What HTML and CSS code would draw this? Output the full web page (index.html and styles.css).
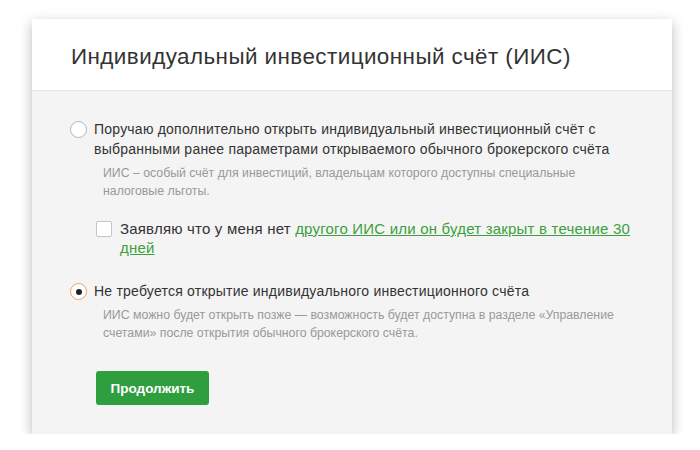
FILE: index.html
```html
<!DOCTYPE html>
<html lang="ru">
<head>
<meta charset="utf-8">
<link rel="stylesheet" href="styles.css">
</head>
<body>
<div class="card">
  <div class="card-head">
    <h1 class="title">Индивидуальный инвестиционный счёт (ИИС)</h1>
  </div>
  <div class="card-body">
    <div class="option">
      <span class="radio"></span>
      <div class="option-text">
        <div class="label">Поручаю дополнительно открыть индивидуальный инвестиционный счёт с выбранными ранее параметрами открываемого обычного брокерского счёта</div>
        <div class="hint">ИИС – особый счёт для инвестиций, владельцам которого доступны специальные налоговые льготы.</div>
      </div>
    </div>
    <div class="check-row">
      <span class="checkbox"></span>
      <div class="check-label">Заявляю что у меня нет <a class="link" href="#">другого ИИС или он будет закрыт в течение 30 дней</a></div>
    </div>
    <div class="option option-second">
      <span class="radio radio-on"></span>
      <div class="option-text">
        <div class="label">Не требуется открытие индивидуального инвестиционного счёта</div>
        <div class="hint">ИИС можно будет открыть позже — возможность будет доступна в разделе «Управление счетами» после открытия обычного брокерского счёта.</div>
      </div>
    </div>
    <button class="btn" type="button">Продолжить</button>
  </div>
</div>
</body>
</html>
```
FILE: styles.css
```css
* { box-sizing: border-box; }
html, body { margin: 0; padding: 0; background: #fff; }
body {
  font-family: "Liberation Sans", Arial, sans-serif;
  color: #333;
  padding: 19px 28px 0 32px;
}
.card {
  width: 640px;
  background: #f4f4f4;
  box-shadow: 0 4px 12px rgba(0,0,0,0.28);
}
.card-head {
  background: #fff;
  height: 72px;
  border-bottom: 1px solid #e6e6e6;
  padding: 5px 39px 0;
  display: flex;
  align-items: center;
}
.title {
  margin: 0;
  font-weight: normal;
  font-size: 22.4px;
  color: #333;
  letter-spacing: 0.45px;
}
.card-body {
  padding: 28px 39px 29px 38px;
}
.option {
  display: flex;
  gap: 7px;
  align-items: flex-start;
}
.option-second { margin-top: 24px; }
.radio {
  flex: none;
  width: 17px;
  height: 17px;
  border-radius: 50%;
  border: 1px solid #b5b5b5;
  background: #fff;
  margin-top: 2px;
  display: flex;
  align-items: center;
  justify-content: center;
}
.radio-on { border-color: #e7a46a; }
.radio-on::after {
  content: "";
  width: 6px;
  height: 6px;
  border-radius: 50%;
  background: #222;
}
.label {
  font-size: 14px;
  line-height: 20px;
  letter-spacing: 0.22px;
  color: #333;
}
.hint {
  margin-top: 5px;
  padding-left: 9px;
  font-size: 12.3px;
  line-height: 18px;
  letter-spacing: 0;
  color: #999;
}
.check-row {
  display: flex;
  gap: 8px;
  margin-top: 19px;
  padding-left: 26px;
}
.checkbox {
  flex: none;
  width: 16px;
  height: 16px;
  border: 1px solid #c4c4c4;
  border-radius: 2px;
  background: #fff;
  margin-top: 2px;
}
.check-label {
  font-size: 15px;
  line-height: 19px;
  letter-spacing: 0.2px;
  color: #333;
}
.link {
  color: #3d9f3d;
  text-decoration: underline;
}
.btn {
  display: block;
  margin: 29px 0 0 26px;
  width: 113px;
  height: 34px;
  border: none;
  border-radius: 3px;
  background: #2f9e3e;
  color: #fff;
  font-family: "Liberation Sans", Arial, sans-serif;
  font-size: 13.5px;
  font-weight: bold;
  padding: 0;
}
```
